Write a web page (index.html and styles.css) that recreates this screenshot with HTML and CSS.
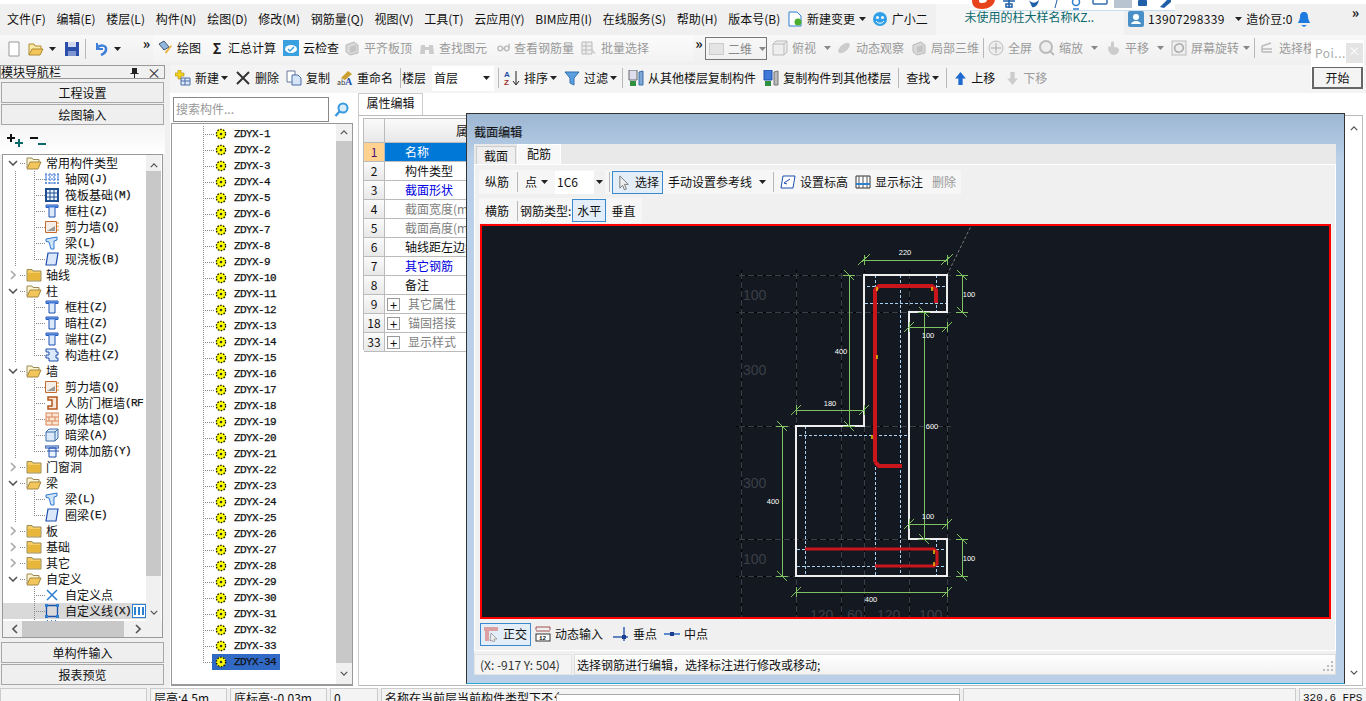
FILE: index.html
```html
<!DOCTYPE html>
<html lang="zh-CN">
<head>
    <meta charset="UTF-8">
    <title>截面编辑</title>
    <link rel="stylesheet" href="styles.css">
</head>
<body>
    <!-- shared icons -->
    <svg class="defs" width="0" height="0">
        <symbol id="gear" viewBox="0 0 12 12"><circle cx="6" cy="6" r="5" fill="#ff0"/><circle cx="6" cy="6" r="4.600" fill="none" stroke="#111" stroke-width="1.400" stroke-dasharray="1.500 1.400"/><circle cx="6" cy="6" r="1.300" fill="#333"/></symbol>
        <symbol id="folder" viewBox="0 0 16 14"><path d="M1 3V1.500h5L7 3h8v10H1z" fill="#f4cd62" stroke="#9b8a55"/><path d="M2 5h12v7H2z" fill="#e9b63c"/></symbol>
        <symbol id="folder-open" viewBox="0 0 16 14"><path d="M1 12V2h5l1 1.500h6V6" fill="#fbf3d0" stroke="#9b8a55"/><path d="M1 13l3-7h11l-3 7z" fill="#f2c65a" stroke="#a58a45"/></symbol>
        <symbol id="col" viewBox="0 0 14 14"><path d="M1 1h12v2.500H10V13H4V3.500H1z" fill="#dce9fb" stroke="#1d4fb0"/><path d="M1.500 1.500h11v2h-11z" fill="#3f78d8"/></symbol>
        <symbol id="wall" viewBox="0 0 14 14"><path d="M.5 1.500h11v11H.5z" fill="#f4eee8" stroke="#c86a28"/><path d="M2 11l8-5v5z" fill="#999"/><path d="M13 2v10" stroke="#e08a2a" stroke-dasharray="2 1.500"/></symbol>
        <symbol id="beam" viewBox="0 0 14 14"><path d="M1 3l11-2v3L9 5v8H6l-2-7-3-.5z" fill="#cfe3f8" stroke="#2c7ad0"/></symbol>
        <symbol id="slab" viewBox="0 0 14 14"><path d="M3 1h10l-2 12H1z" fill="#dbe8fa" stroke="#1d4fb0" stroke-width="1.200"/></symbol>
        <symbol id="caret" viewBox="0 0 7 4"><path d="M0 0h7L3.500 4z" fill="#222"/></symbol>
        <symbol id="caret-g" viewBox="0 0 7 4"><path d="M0 0h7L3.500 4z" fill="#888"/></symbol>
        <symbol id="gray" viewBox="0 0 16 16"><path d="M2 5l8-3 4 3v8l-8 2-4-3z" fill="#d8d8d8" stroke="#bbb"/><path d="M6 7l6-2v6l-6 2z" fill="#c4c4c4"/></symbol>
        <symbol id="chev-d" viewBox="0 0 10 6"><path d="M1 1l4 4 4-4" fill="none" stroke="#555" stroke-width="1.600"/></symbol>
        <symbol id="chev-r" viewBox="0 0 6 10"><path d="M1 1l4 4-4 4" fill="none" stroke="#aaa" stroke-width="1.600"/></symbol>
        <symbol id="chev-u" viewBox="0 0 10 6"><path d="M1 5l4-4 4 4" fill="none" stroke="#555" stroke-width="1.600"/></symbol>
        <symbol id="chev-l" viewBox="0 0 6 10"><path d="M5 1L1 5l4 4" fill="none" stroke="#555" stroke-width="1.600"/></symbol>
        <symbol id="chev-rd" viewBox="0 0 6 10"><path d="M1 1l4 4-4 4" fill="none" stroke="#555" stroke-width="1.600"/></symbol>
    </svg>

    <div class="strip"></div>

    <div class="menubar">
        <span>文件(F)</span><span>编辑(E)</span><span>楼层(L)</span><span>构件(N)</span><span>绘图(D)</span><span>修改(M)</span><span>钢筋量(Q)</span><span>视图(V)</span><span>工具(T)</span><span>云应用(Y)</span><span>BIM应用(I)</span><span>在线服务(S)</span><span>帮助(H)</span><span>版本号(B)</span>
        <span class="tool change">
            <svg class="i16" viewBox="0 0 16 16"><path d="M2 1h8l4 4v10H2z" fill="#fff" stroke="#2f7fd0"/><circle cx="11" cy="11" r="3.500" fill="#4caf2e"/></svg>
            新建变更 <svg class="car"><use href="#caret"/></svg>
        </span>
        <span class="tool helper">
            <svg class="i16" viewBox="0 0 16 16"><circle cx="8" cy="8" r="7" fill="#2f9fe8"/><circle cx="5.500" cy="6.500" r="1.500" fill="#fff"/><circle cx="10.500" cy="6.500" r="1.500" fill="#fff"/><path d="M4 10c2 3 6 3 8 0" stroke="#fff" fill="none"/></svg>
            广小二
        </span>
        <span class="msg-tab">未使用的柱大样名称KZ..</span>
        <span class="tool user">
            <svg class="i16" viewBox="0 0 16 16"><rect width="16" height="16" rx="2" fill="#4a90c8"/><circle cx="8" cy="6" r="3" fill="#fff"/><path d="M3 13c1-4 9-4 10 0z" fill="#fff"/></svg>
            <span class="phone">13907298339</span> <svg class="car"><use href="#caret"/></svg>
        </span>
        <span class="beans">造价豆:0</span>
        <svg class="bell" viewBox="0 0 14 16"><path d="M7 1c3 0 4 2 4 5 0 3 2 5 2 6H1c0-1 2-3 2-6 0-3 1-5 4-5z" fill="#1f7ae0"/><path d="M4 14h6l-3 2z" fill="#1f7ae0"/></svg>
        <span class="more">»</span>
    </div>

    <div class="toolbar">
        <span class="tb-group">
            <svg class="i16" viewBox="0 0 16 16"><path d="M3 1h10l0 3v11H3z" fill="#fff" stroke="#999"/></svg>
            <svg class="i16 open" viewBox="0 0 16 16"><path d="M1 14V3h5l1 2h6v3" fill="#fbe9a8" stroke="#b08a30"/><path d="M1 14l3-6h11l-3 6z" fill="#f2c65a" stroke="#b08a30"/></svg>
            <svg class="car"><use href="#caret"/></svg>
            <svg class="i16 save" viewBox="0 0 16 16"><path d="M1 1h14v14H1z" fill="#2b4fa8"/><path d="M4 1h8v5H4z" fill="#cfd9f0"/><path d="M4 10h8v5H4z" fill="#7f95cf"/></svg>
            <i class="sep"></i>
            <svg class="i16" viewBox="0 0 16 16"><path d="M4 2v6h6" fill="none" stroke="#3f7fd8" stroke-width="2"/><path d="M4 7c3-4 10-3 9 2-.5 3-3 4-5 5" fill="none" stroke="#3f7fd8" stroke-width="2.500"/></svg>
            <svg class="car"><use href="#caret"/></svg>
        </span>
        <span class="more inline">»</span>
        <span class="tb-seg seg-main">
            <span class="tb"><svg class="i16" viewBox="0 0 16 16"><path d="M2 4l5-3 5 6-5 3z" fill="#8fb7e0" stroke="#456"/><path d="M8 12l6-7 1 1-6 8z" fill="#e6b23a"/></svg>绘图</span>
            <span class="tb"><b class="sigma">Σ</b>汇总计算</span>
            <span class="tb"><svg class="i16" viewBox="0 0 16 16"><rect width="16" height="16" fill="#3aa0e0"/><ellipse cx="8" cy="9" rx="6" ry="4" fill="#fff"/><path d="M5 9l2 2 4-4" stroke="#3aa0e0" fill="none" stroke-width="1.500"/></svg>云检查</span>
            <span class="tb off back"><svg class="i16"><use href="#gray"/></svg>平齐板顶</span>
            <span class="tb off"><svg class="i16" viewBox="0 0 16 16"><path d="M2 5h4v9H1zM10 5h4l1 9h-5zM6 7h4v3H6z" fill="#ccc"/></svg>查找图元</span>
            <span class="tb off"><svg class="i13 glasses" viewBox="0 0 14 14"><circle cx="3.500" cy="8" r="2.500" fill="none" stroke="#bbb" stroke-width="1.500"/><circle cx="10.500" cy="8" r="2.500" fill="none" stroke="#bbb" stroke-width="1.500"/><path d="M6 8h2M13 8V3" stroke="#bbb" stroke-width="1.500"/></svg>查看钢筋量</span>
            <span class="tb off"><svg class="i16" viewBox="0 0 16 16"><path d="M1 2h10v12H1zM1 6h10M1 10h10M5 2v12" fill="#eee" stroke="#bbb"/><path d="M10 7l5 7-3-1z" fill="#ccc"/></svg>批量选择</span>
        </span>
        <span class="more inline m2">»</span>
        <span class="view-box"><i class="swatch"></i>二维<svg class="car view-car"><use href="#caret-g"/></svg></span>
        <span class="tb-seg seg-view">
            <span class="tb off"><svg class="i16" viewBox="0 0 16 16"><path d="M1 4h11v11H1zM1 4l3-3h11v11l-3 3M12 4l3-3" fill="#eee" stroke="#bbb"/></svg>俯视<svg class="car gap-c"><use href="#caret-g"/></svg></span>
            <span class="tb off back"><svg class="i16" viewBox="0 0 16 16"><ellipse cx="8" cy="8" rx="7" ry="3.500" transform="rotate(-40 8 8)" fill="#ccc"/></svg>动态观察</span>
            <span class="tb off"><svg class="i16"><use href="#gray"/></svg>局部三维</span>
            <i class="sep"></i>
            <span class="tb off"><svg class="i16" viewBox="0 0 16 16"><circle cx="8" cy="8" r="7" fill="#eee" stroke="#bbb"/><path d="M8 3v10M3 8h10" stroke="#aaa"/></svg>全屏</span>
            <span class="tb off"><svg class="i16" viewBox="0 0 16 16"><circle cx="7" cy="7" r="6" fill="#eee" stroke="#bbb" stroke-width="2"/><path d="M11 11l4 4" stroke="#bbb" stroke-width="2"/></svg>缩放<svg class="car gap-c"><use href="#caret-g"/></svg></span>
            <span class="tb off"><svg class="i16" viewBox="0 0 16 16"><path d="M3 8c0-2 3-2 3-1V3c0-2 3-2 3 0v4c3 0 5 1 5 3s-2 5-5 5-6-3-6-7z" fill="#ccc"/></svg>平移<svg class="car gap-c"><use href="#caret-g"/></svg></span>
            <span class="tb off"><svg class="i16" viewBox="0 0 16 16"><rect x="1" y="1" width="14" height="14" fill="#eee" stroke="#bbb"/><path d="M4 10a4.500 4.500 0 0 1 8-4M12 6a4.500 4.500 0 0 1-8 4" fill="none" stroke="#aaa" stroke-width="1.500"/></svg>屏幕旋转<svg class="car"><use href="#caret-g"/></svg></span>
            <i class="sep"></i>
            <span class="tb off"><svg class="i16" viewBox="0 0 16 16"><path d="M3 6l9-3M3 9h10M3 12h10M3 6v6" stroke="#bbb" fill="none" stroke-width="1.500"/></svg>选择楼</span>
        </span>
    </div>

    <div class="main">
        <aside class="nav">
            <div class="nav-title">
                <span>模块导航栏</span>
                <svg class="pin" viewBox="0 0 9 11"><path d="M2 1h5v5h1.500v1h-3.500v4h-1V7H.500V6H2z" fill="#222"/></svg>
                <span class="close">×</span>
            </div>
            <div class="nav-btn">工程设置</div>
            <div class="nav-btn">绘图输入</div>
            <div class="tree-tools">
                <svg width="22" height="16" viewBox="0 0 22 16"><path d="M4 2v8M0 6h8" stroke="#111" stroke-width="2"/><path d="M12 7v8M8 11h8" stroke="#0a6a6a" stroke-width="2"/></svg>
                <svg width="18" height="16" viewBox="0 0 18 16"><path d="M0 6h8" stroke="#111" stroke-width="2"/><path d="M8 12h8" stroke="#0a6a6a" stroke-width="2"/></svg>
            </div>
            <div class="tree-box">
                <div class="tree-view">
                    <div class="tree">
                        <div class="node"><svg class="exp"><use href="#chev-d"/></svg><svg class="fld"><use href="#folder-open"/></svg>常用构件类型</div>
                        <div class="kid"><svg class="kic" viewBox="0 0 14 14"><path d="M1 1v12M5 1v12M9 1v12M13 1v12M0 3h14M0 7h14M0 11h14" stroke="#2f6fd0" stroke-dasharray="2 1"/></svg>轴网<em>(J)</em></div>
                        <div class="kid"><svg class="kic" viewBox="0 0 14 14"><rect x="1" y="1" width="12" height="12" fill="#eaf2fc" stroke="#1d4f90" stroke-width="2"/><path d="M5 1v12M9 1v12M1 5h12M1 9h12" stroke="#1d4f90"/></svg>筏板基础<em>(M)</em></div>
                        <div class="kid"><svg class="kic"><use href="#col"/></svg>框柱<em>(Z)</em></div>
                        <div class="kid"><svg class="kic"><use href="#wall"/></svg>剪力墙<em>(Q)</em></div>
                        <div class="kid"><svg class="kic"><use href="#beam"/></svg>梁<em>(L)</em></div>
                        <div class="kid last"><svg class="kic"><use href="#slab"/></svg>现浇板<em>(B)</em></div>
                        <div class="node"><svg class="exp r"><use href="#chev-r"/></svg><svg class="fld"><use href="#folder"/></svg>轴线</div>
                        <div class="node"><svg class="exp"><use href="#chev-d"/></svg><svg class="fld"><use href="#folder-open"/></svg>柱</div>
                        <div class="kid"><svg class="kic"><use href="#col"/></svg>框柱<em>(Z)</em></div>
                        <div class="kid"><svg class="kic"><use href="#col"/></svg>暗柱<em>(Z)</em></div>
                        <div class="kid"><svg class="kic"><use href="#col"/></svg>端柱<em>(Z)</em></div>
                        <div class="kid last"><svg class="kic" viewBox="0 0 14 14"><path d="M4 1h7v3h2v3h-2v3h2v3H4v-3H1V7h3V4H1V1z" fill="#dce9fb" stroke="#1d4fb0"/></svg>构造柱<em>(Z)</em></div>
                        <div class="node"><svg class="exp"><use href="#chev-d"/></svg><svg class="fld"><use href="#folder-open"/></svg>墙</div>
                        <div class="kid"><svg class="kic"><use href="#wall"/></svg>剪力墙<em>(Q)</em></div>
                        <div class="kid"><svg class="kic" viewBox="0 0 14 14"><path d="M3 1h9v12H3v-3h4V4H3z" fill="#f6e7d8" stroke="#b5561c" stroke-width="1.500"/></svg>人防门框墙<em>(RF</em></div>
                        <div class="kid"><svg class="kic" viewBox="0 0 14 14"><rect x="1" y="1" width="13" height="12" fill="#fbe6d4" stroke="#d8875a"/><path d="M1 5h13M1 9h13M7 1v4M4 5v4M10 5v4M7 9v4" stroke="#d8875a"/></svg>砌体墙<em>(Q)</em></div>
                        <div class="kid"><svg class="kic" viewBox="0 0 14 14"><path d="M1 4l3-3h9v9l-3 3H1z" fill="#dce9f8" stroke="#3a6ea8"/><path d="M1 4h9v9M10 4l3-3" fill="none" stroke="#3a6ea8"/></svg>暗梁<em>(A)</em></div>
                        <div class="kid last"><svg class="kic" viewBox="0 0 14 14"><path d="M0 2h14v2H0zM4 4h7v9H4zM2 7h12" fill="#eaf2fc" stroke="#1d4fb0"/></svg>砌体加筋<em>(Y)</em></div>
                        <div class="node"><svg class="exp r"><use href="#chev-r"/></svg><svg class="fld"><use href="#folder"/></svg>门窗洞</div>
                        <div class="node"><svg class="exp"><use href="#chev-d"/></svg><svg class="fld"><use href="#folder-open"/></svg>梁</div>
                        <div class="kid"><svg class="kic"><use href="#beam"/></svg>梁<em>(L)</em></div>
                        <div class="kid last"><svg class="kic"><use href="#slab"/></svg>圈梁<em>(E)</em></div>
                        <div class="node"><svg class="exp r"><use href="#chev-r"/></svg><svg class="fld"><use href="#folder"/></svg>板</div>
                        <div class="node"><svg class="exp r"><use href="#chev-r"/></svg><svg class="fld"><use href="#folder"/></svg>基础</div>
                        <div class="node"><svg class="exp r"><use href="#chev-r"/></svg><svg class="fld"><use href="#folder"/></svg>其它</div>
                        <div class="node"><svg class="exp"><use href="#chev-d"/></svg><svg class="fld"><use href="#folder-open"/></svg>自定义</div>
                        <div class="kid solo"><svg class="kic" viewBox="0 0 14 14"><path d="M2 2l10 10M12 2L2 12" stroke="#2f7fd0" stroke-width="1.500"/></svg>自定义点</div>
                        <div class="kid solo sel"><svg class="kic" viewBox="0 0 14 14"><path d="M1.500 1.500h11v11h-11z" fill="none" stroke="#1d4fb0" stroke-width="1.300"/><path d="M0 0h3v3H0zM11 0h3v3h-3zM0 11h3v3H0zM11 11h3v3h-3z" fill="#2f7fd0"/></svg>自定义线<em>(X)</em><svg class="sel-ic" viewBox="0 0 14 14"><rect x=".5" y=".5" width="13" height="13" fill="#fff" stroke="#2f7fd0"/><path d="M3 3v8M7 3v8M11 3v8" stroke="#2f7fd0" stroke-width="2"/></svg></div>
                        <div class="kid solo"><svg class="kic" viewBox="0 0 14 14"><path d="M0 3l3-3M4 3l3-3M8 3l3-3" stroke="#2f7fd0"/></svg></div>
                    </div>
                    <div class="vbar">
                        <svg class="sb-up"><use href="#chev-u"/></svg>
                        <div class="thumb"></div>
                        <div class="rest"><svg class="sb-dn"><use href="#chev-d"/></svg></div>
                    </div>
                </div>
                <div class="hbar"><svg class="sb-l"><use href="#chev-l"/></svg><div class="hthumb"></div><svg class="sb-r"><use href="#chev-rd"/></svg></div>
            </div>
            <div class="nav-btn low">单构件输入</div>
            <div class="nav-btn">报表预览</div>
        </aside>

        <section class="work">
            <div class="cmdbar">
                <span class="tb"><svg class="i16" viewBox="0 0 16 16"><path d="M0 3h3V0h3v3h3v3H6v3H3V6H0z" fill="#f2d020" stroke="#a88a10" stroke-width=".6"/><path d="M6 8h9v7H6zM6 11h9M10 8v7" fill="#dfe8f8" stroke="#4a6ea8"/></svg>新建<svg class="car"><use href="#caret"/></svg></span>
                <span class="tb"><svg class="i16" viewBox="0 0 16 16"><path d="M2 2l12 12M14 2L2 14" stroke="#333" stroke-width="2"/></svg>删除</span>
                <span class="tb"><svg class="i16" viewBox="0 0 16 16"><path d="M1 1h8v11H1z" fill="#fff" stroke="#6a7a9a"/><path d="M6 5h6l3 3v7H6z" fill="#d6e4f8" stroke="#4a6ea8"/></svg>复制</span>
                <span class="tb"><svg class="i16" viewBox="0 0 16 16"><path d="M4 8l7-7 4 3-7 6z" fill="#c9a030"/><text x="0" y="15" class="ab">ab</text><text x="8" y="15" class="aa">A</text></svg>重命名</span>
                <i class="sep s-a"></i>
                <span>楼层</span>
                <span class="floor-box">首层<svg class="car"><use href="#caret"/></svg></span>
                <i class="sep s-b"></i>
                <span class="tb"><svg class="i16" viewBox="0 0 16 16"><text x="0" y="7" class="az1">A</text><text x="0" y="15" class="az2">Z</text><path d="M12 1v13M9 11l3 4 3-4" stroke="#222" fill="none"/></svg>排序<svg class="car"><use href="#caret"/></svg></span>
                <span class="tb"><svg class="i16" viewBox="0 0 16 16"><path d="M1 2h14L10 8v7l-4-2V8z" fill="#5aa0e0" stroke="#2f70b0"/></svg>过滤<svg class="car"><use href="#caret"/></svg></span>
                <i class="sep s-c"></i>
                <span class="tb"><svg class="i16" viewBox="0 0 16 16"><path d="M1 0h8v10H1z" fill="#dde" stroke="#666"/><path d="M2 11h6v5H2z" fill="#2f9040"/><path d="M11 2l4-1v14h-4z" fill="#7fa8d8" stroke="#3a6ea8"/></svg>从其他楼层复制构件</span>
                <span class="tb"><svg class="i16" viewBox="0 0 16 16"><path d="M1 0h8v10H1z" fill="#3f78d8" stroke="#1d4fb0"/><path d="M2 11h6v5H2z" fill="#2f9040"/><path d="M11 2l4-1v14h-4z" fill="#bbb" stroke="#777"/></svg>复制构件到其他楼层</span>
                <i class="sep"></i>
                <span class="tb">查找<svg class="car"><use href="#caret"/></svg></span>
                <i class="sep"></i>
                <span class="tb"><svg class="i13" viewBox="0 0 12 14"><path d="M6 1l5 6H8v6H4V7H1z" fill="#1f6ad0"/></svg>上移</span>
                <span class="tb off down"><svg class="i13" viewBox="0 0 12 14"><path d="M6 13l5-6H8V1H4v6H1z" fill="#ccc"/></svg>下移</span>
            </div>
            <div class="panes">
                <div class="comps">
                    <div class="search"><span class="search-in">搜索构件...</span>
                        <svg class="mag" viewBox="0 0 16 16"><circle cx="9" cy="6" r="4.500" fill="#d8ecfa" stroke="#3a9ae0" stroke-width="2"/><path d="M5.500 9.500L1.500 14" stroke="#3a9ae0" stroke-width="2.500"/></svg>
                    </div>
                    <div class="comp-body">
                        <div class="comp-list">
                            <div class="row"><svg class="g"><use href="#gear"/></svg>ZDYX-1</div>
                            <div class="row"><svg class="g"><use href="#gear"/></svg>ZDYX-2</div>
                            <div class="row"><svg class="g"><use href="#gear"/></svg>ZDYX-3</div>
                            <div class="row"><svg class="g"><use href="#gear"/></svg>ZDYX-4</div>
                            <div class="row"><svg class="g"><use href="#gear"/></svg>ZDYX-5</div>
                            <div class="row"><svg class="g"><use href="#gear"/></svg>ZDYX-6</div>
                            <div class="row"><svg class="g"><use href="#gear"/></svg>ZDYX-7</div>
                            <div class="row"><svg class="g"><use href="#gear"/></svg>ZDYX-8</div>
                            <div class="row"><svg class="g"><use href="#gear"/></svg>ZDYX-9</div>
                            <div class="row"><svg class="g"><use href="#gear"/></svg>ZDYX-10</div>
                            <div class="row"><svg class="g"><use href="#gear"/></svg>ZDYX-11</div>
                            <div class="row"><svg class="g"><use href="#gear"/></svg>ZDYX-12</div>
                            <div class="row"><svg class="g"><use href="#gear"/></svg>ZDYX-13</div>
                            <div class="row"><svg class="g"><use href="#gear"/></svg>ZDYX-14</div>
                            <div class="row"><svg class="g"><use href="#gear"/></svg>ZDYX-15</div>
                            <div class="row"><svg class="g"><use href="#gear"/></svg>ZDYX-16</div>
                            <div class="row"><svg class="g"><use href="#gear"/></svg>ZDYX-17</div>
                            <div class="row"><svg class="g"><use href="#gear"/></svg>ZDYX-18</div>
                            <div class="row"><svg class="g"><use href="#gear"/></svg>ZDYX-19</div>
                            <div class="row"><svg class="g"><use href="#gear"/></svg>ZDYX-20</div>
                            <div class="row"><svg class="g"><use href="#gear"/></svg>ZDYX-21</div>
                            <div class="row"><svg class="g"><use href="#gear"/></svg>ZDYX-22</div>
                            <div class="row"><svg class="g"><use href="#gear"/></svg>ZDYX-23</div>
                            <div class="row"><svg class="g"><use href="#gear"/></svg>ZDYX-24</div>
                            <div class="row"><svg class="g"><use href="#gear"/></svg>ZDYX-25</div>
                            <div class="row"><svg class="g"><use href="#gear"/></svg>ZDYX-26</div>
                            <div class="row"><svg class="g"><use href="#gear"/></svg>ZDYX-27</div>
                            <div class="row"><svg class="g"><use href="#gear"/></svg>ZDYX-28</div>
                            <div class="row"><svg class="g"><use href="#gear"/></svg>ZDYX-29</div>
                            <div class="row"><svg class="g"><use href="#gear"/></svg>ZDYX-30</div>
                            <div class="row"><svg class="g"><use href="#gear"/></svg>ZDYX-31</div>
                            <div class="row"><svg class="g"><use href="#gear"/></svg>ZDYX-32</div>
                            <div class="row"><svg class="g"><use href="#gear"/></svg>ZDYX-33</div>
                            <div class="row end"><span class="row-sel"><svg class="g"><use href="#gear"/></svg>ZDYX-34</span></div>
                        </div>
                        <div class="list-bar">
                            <svg class="sb-up"><use href="#chev-u"/></svg>
                            <div class="list-thumb"></div>
                            <svg class="sb-dn"><use href="#chev-d"/></svg>
                        </div>
                    </div>
                </div>
                <div class="props">
                    <div class="tab-head"><span class="prop-tab">属性编辑</span></div>
                    <div class="prop-body">
                        <div class="prop-table">
                            <div class="ph"></div><div class="ph name">属</div>
                            <div class="pn cur">1</div><div class="pv cur">名称</div>
                            <div class="pn">2</div><div class="pv">构件类型</div>
                            <div class="pn">3</div><div class="pv blue">截面形状</div>
                            <div class="pn">4</div><div class="pv grey">截面宽度(mm)</div>
                            <div class="pn">5</div><div class="pv grey">截面高度(mm)</div>
                            <div class="pn">6</div><div class="pv">轴线距左边线距离</div>
                            <div class="pn">7</div><div class="pv blue">其它钢筋</div>
                            <div class="pn">8</div><div class="pv">备注</div>
                            <div class="pn">9</div><div class="pv grey group"><i class="plus">+</i>其它属性</div>
                            <div class="pn">18</div><div class="pv grey group"><i class="plus">+</i>锚固搭接</div>
                            <div class="pn">33</div><div class="pv grey group"><i class="plus">+</i>显示样式</div>
                        </div>
                        <div class="prop-bar">
                            <svg class="sb-up"><use href="#chev-u"/></svg>
                            <svg class="sb-dn"><use href="#chev-d"/></svg>
                        </div>
                    </div>
                </div>
            </div>
        </section>
    </div>

    <div class="status">
        <span class="cell c1"></span>
        <span class="cell c2">层高:4.5m</span>
        <span class="cell c3">底标高:-0.03m</span>
        <span class="cell c4">0</span>
        <span class="cell c5">名称在当前层当前构件类型下不允</span>
        <span class="cell c6"></span>
        <span class="cell c7">320.6 FPS</span>
    </div>

    <!-- section editor window -->
    <div class="dialog">
        <div class="dlg-title">截面编辑</div>
        <div class="dlg-pane">
            <div class="dlg-tabs"><span class="dtab">截面</span><span class="dtab on">配筋</span></div>
            <div class="dlg-content">
                <div class="dbar first">
                    <span>纵筋</span><i class="sep ml4"></i>
                    <span class="tb ml3">点<svg class="car"><use href="#caret"/></svg></span>
                    <span class="rebar-box ml3">1C6<span class="rebar-btn"><svg class="car"><use href="#caret"/></svg></span></span>
                    <i class="sep"></i>
                    <span class="tb active pick"><svg class="i13" viewBox="0 0 12 16"><path d="M1 1l9 9H6l2 5-2 1-2-5-3 3z" fill="#eee" stroke="#777"/></svg>选择</span>
                    <span class="tb ml1">手动设置参考线<svg class="car gap-r"><use href="#caret"/></svg></span>
                    <i class="sep ml3"></i>
                    <span class="tb ml2"><svg class="i16" viewBox="0 0 16 16"><path d="M3 2h12l-2 12H1z" fill="#fff" stroke="#1d4fb0"/><path d="M4 9l6-4M4 9l3 1" stroke="#1d4fb0" fill="none"/></svg>设置标高</span>
                    <span class="tb ml3"><svg class="i16" viewBox="0 0 16 16"><path d="M1 2h14v12H1z" fill="#fff" stroke="#333"/><path d="M4 2v12M8 2v12M12 2v12" stroke="#555"/><path d="M1 10h14" stroke="#2f7fd0" stroke-width="2"/></svg>显示标注</span>
                    <span class="del">删除</span>
                </div>
                <div class="dbar second">
                    <span>横筋</span><i class="sep"></i>
                    <span>钢筋类型:</span>
                    <span class="tb active">水平</span>
                    <span class="ml3">垂直</span>
                </div>
                <div class="canvas">
                    <svg class="cad" viewBox="481 227 849 391">
                        <g class="grid">
                            <path d="M735 276H950M735 313H950M735 427H950M735 540H950M735 577H950M740 271V618M795 271V618M840 271V618M863 271V618M908 271V618M946 271V618"/>
                        </g>
                        <g class="griddash">
                            <path d="M735 276H950M735 313H950M735 427H950M735 540H950M735 577H950M740 271V618M795 271V618M840 271V618M863 271V618M908 271V618M946 271V618"/>
                        </g>
                        <path class="diag" d="M946 276L970 227"/>
                        <path class="guide" d="M866 287H946M864 304H946M798 436H908M796 550H806M935 550H946M796 567H874M935 567H946M804 427V577M874 276V290M874 463V577M899 276V577M935 276V313M935 540V577"/>
                        <path class="outline" d="M863 276H946V313H908V540H946V577H795V427H863Z"/>
                        <path class="bar" d="M874 463V291L878 287H931L935 291V304M874 463L878 467H901"/>
                        <path class="bar thin" d="M804 550H933L936 553V565L933 567H874"/>
                        <path class="mark" d="M876 288v4M931 288v4M876 356v4M871 436v4M933 551v4M933 563v4"/>
                        <g class="dim">
                            <path d="M863 261H946M857 266l12-11M940 266l12-11M863 256v10M946 256v10"/>
                            <path d="M961 276V313M956 271l10 10M956 308l10 10M955 276h12M955 313h12"/>
                            <path d="M848 276V427M843 271l10 10M843 422l10 10M842 276h12M842 427h12"/>
                            <path d="M908 328H946M903 333l10-10M941 333l10-10M908 323v10M946 323v10"/>
                            <path d="M923 313V540M918 308l10 10M918 535l10 10M917 313h12M917 540h12"/>
                            <path d="M795 411H863M790 416l10-10M858 416l10-10M795 406v10M863 406v10"/>
                            <path d="M781 427V577M776 422l10 10M776 572l10 10M775 427h12M775 577h12"/>
                            <path d="M908 525H946M903 530l10-10M941 530l10-10M908 520v10M946 520v10"/>
                            <path d="M961 540V577M956 535l10 10M956 572l10 10M955 540h12M955 577h12"/>
                            <path d="M795 593H946M790 598l10-10M941 598l10-10M795 588v10M946 588v10"/>
                        </g>
                        <g class="num">
                            <text x="904" y="256">220</text>
                            <text x="968" y="298">100</text>
                            <text x="840" y="355">400</text>
                            <text x="927" y="339">100</text>
                            <text x="931" y="430">600</text>
                            <text x="829" y="407">180</text>
                            <text x="772" y="505">400</text>
                            <text x="927" y="520">100</text>
                            <text x="968" y="562">100</text>
                            <text x="870" y="603">400</text>
                        </g>
                        <g class="axis">
                            <text x="742" y="301">100</text>
                            <text x="742" y="376">300</text>
                            <text x="742" y="489">300</text>
                            <text x="742" y="565">100</text>
                            <text x="809" y="621">120</text>
                            <text x="846" y="621">60</text>
                            <text x="876" y="621">120</text>
                            <text x="918" y="621">100</text>
                        </g>
                    </svg>
                </div>
                <div class="dbar third">
                    <span class="tb active"><svg class="i16" viewBox="0 0 16 16"><path d="M1 1h14v4H6v10H2V5H1z" fill="#dca0a0"/><path d="M8 7l6 6-3 0 1 2-2 1-1-2-2 1z" fill="#eee" stroke="#777" stroke-width=".6"/></svg>正交</span>
                    <span class="tb"><svg class="i16" viewBox="0 0 16 16"><path d="M1 1h14M1 5h14M1 1v3M15 1v3" stroke="#a05050" fill="none"/><rect x="1" y="8" width="14" height="7" fill="#fff" stroke="#333"/><text x="4" y="14" class="tiny">12</text></svg>动态输入</span>
                    <span class="gap-group"></span>
                    <span class="tb"><svg class="i16" viewBox="0 0 16 16"><path d="M0 11h15M11 1v14" stroke="#2f5fb0" stroke-width="1.500"/><rect x="9" y="9" width="4" height="4" fill="#1d3f90"/></svg>垂点</span>
                    <span class="tb ml3"><svg class="i16" viewBox="0 0 16 16"><path d="M0 8h16" stroke="#5a8ad0" stroke-width="2"/><rect x="6" y="6" width="4" height="4" fill="#1d3f90"/></svg>中点</span>
                </div>
            </div>
            <div class="dlg-status">
                <span class="coord">(X: -917 Y: 504)</span>
                <span class="hint">选择钢筋进行编辑，选择标注进行修改或移动;</span>
                <svg class="grip" viewBox="0 0 12 12"><path d="M9 1h2v2H9zM5 5h2v2H5zM9 5h2v2H9zM1 9h2v2H1zM5 9h2v2H5zM9 9h2v2H9z" fill="#bbb"/></svg>
            </div>
        </div>
    </div>

    <!-- cut-off floating bar at the top edge -->
    <div class="float-bar">
        <svg width="26" height="10" viewBox="0 0 26 10"><path d="M2 0c0 6 3 9 10 9 6 0 12-3 13-9h-8c0 2-2 3-5 3S9 2 9 0z" fill="#e8441c"/></svg>
        <svg class="nudge" width="14" height="8" viewBox="0 0 14 8"><path d="M1 1h12M4 4h6v3H4zM7 0v8" stroke="#1f5fa8" stroke-width="1.500" fill="none"/></svg>
        <svg width="14" height="8" viewBox="0 0 14 8"><path d="M2 0c3 4 7 3 10 0-1 5-4 8-7 7z" fill="#1f5fa8"/></svg>
        <svg width="8" height="8" viewBox="0 0 8 8"><path d="M5 0L3 8" stroke="#1f5fa8"/></svg>
        <svg width="10" height="10" viewBox="0 0 10 10"><circle cx="5" cy="2" r="3.500" fill="#fff" stroke="#2f7fd0" stroke-width="1.500"/><path d="M2 9h6" stroke="#2f7fd0" stroke-width="1.500"/></svg>
        <svg width="16" height="6" viewBox="0 0 16 6"><rect x="1" y="-3" width="14" height="7" rx="1" fill="#fff" stroke="#2f70b0" stroke-width="1.500"/></svg>
        <svg class="nudge" width="18" height="8" viewBox="0 0 18 8"><rect width="18" height="8" fill="#b8c4d0"/></svg>
        <svg class="nudge" width="10" height="6" viewBox="0 0 10 6"><rect width="9" height="6" rx="1" fill="#1f5fa8"/></svg>
        <svg width="12" height="8" viewBox="0 0 12 8"><path d="M1 7L8 0h4v2L5 8z" fill="#1f5fa8"/></svg>
    </div>

    <!-- small recorder popup -->
    <div class="popup">
        <div class="pop-top"><span>Poi...</span><span class="pop-x">×</span></div>
        <div class="pop-btn">开始</div>
    </div>

    <div class="cover"></div>
</body>
</html>
```

FILE: styles.css
```css
* {
    box-sizing: border-box;
}
html, body {
    margin: 0;
    padding: 0;
}
body {
    position: relative;
    width: 1366px;
    height: 701px;
    overflow: hidden;
    background: #f0f0f0;
    font-family: "Noto Sans CJK SC", "Liberation Sans", sans-serif;
    font-size: 12px;
    line-height: 16px;
    color: #111;
}
.defs { position: absolute; }
svg { flex: none; display: block; }
i, em { font-style: normal; }

.i16 { width: 16px; height: 16px; }
.i13 { width: 13px; height: 15px; }
.car { width: 7px; height: 4px; }
.gap-c { margin-left: 5px; }
.gap-r { margin-left: 3px; }
.sep { width: 1px; height: 20px; background: #b8b8b8; flex: none; }
.ml1 { margin-left: 1px; }
.ml2 { margin-left: 2px; }
.ml3 { margin-left: 3px; }
.ml4 { margin-left: 4px; }

.strip { height: 4px; background: #fff; }

/* menu bar */
.menubar {
    position: relative;
    height: 31px;
    display: flex;
    align-items: center;
    gap: 10.700px;
    padding: 0 0 2px 7px;
    background: #f0f0f0;
    white-space: nowrap;
}
.menubar > * { flex: none; }
.tool { display: flex; align-items: center; gap: 4px; }
.change { margin-left: -4px; }
.helper { margin-left: -5px; }
.msg-tab {
    width: 188px;
    height: 31px;
    margin: 2px 0 0 -2px;
    padding: 5px 0 0 28px;
    background: #f6f6f6;
    color: #0b6a6e;
}
.user { margin-left: -7px; }
.phone { letter-spacing: 0.300px; }
.user .car { margin-left: 6px; }
.beans { margin-left: -6px; }
.bell { width: 14px; height: 16px; margin-left: -6px; }
.more { font-size: 14px; font-weight: 700; line-height: 10px; }
.menubar .more { margin-left: 30px; margin-top: -14px; }

/* main toolbar */
.toolbar {
    height: 27px;
    display: flex;
    align-items: center;
    padding-left: 6px;
    background: linear-gradient(#f8f8f8, #f0f0f0);
    white-space: nowrap;
}
.tb-group { display: flex; align-items: center; gap: 5px; width: 134px; flex: none; }
.tb-group .sep { margin-right: 2px; }
.open { margin-left: 1px; }
.save { margin-left: 3px; }
.more.inline { width: 13px; text-align: center; align-self: flex-start; margin-top: 3px; flex: none; }
.tb-seg { display: flex; align-items: center; gap: 7px; height: 27px; padding-bottom: 2px; }
.seg-main { width: 540px; flex: none; padding-left: 4px; background: linear-gradient(#fbfbfb, #f3f3f3); }
.more.m2 { width: 12px; }
.tb { display: flex; align-items: center; gap: 4px; flex: none; }
.off { color: #9a9a9a; }
.back { margin-left: -2px; }
.glasses { margin-left: 3px; }
.sigma { width: 14px; margin-left: 2px; font-size: 14px; text-align: center; color: #222; }
.view-box {
    width: 62px;
    height: 23px;
    flex: none;
    display: flex;
    align-items: center;
    gap: 4px;
    padding-left: 3px;
    border: 1px solid #777;
    color: #888;
}
.swatch { width: 16px; height: 12px; background: #e4e4e4; border: 1px solid #ccc; }
.view-car { margin-left: 3px; }
.seg-view { margin-left: 5px; }
.seg-view .gap-c { margin-left: 4px; }
.seg-view .sep { margin: 0 -3px; }

/* body columns */
.main {
    height: 623px;
    margin-top: 3px;
    display: flex;
}
.nav {
    width: 165px;
    flex: none;
    display: flex;
    flex-direction: column;
}
.nav-title {
    height: 14px;
    flex: none;
    display: flex;
    align-items: center;
    border: 1px solid #999;
    background: #f0f0f0;
    line-height: 12px;
}
.nav-title span:first-child { flex: 1; }
.pin { width: 9px; height: 11px; margin-right: 8px; }
.close { width: 17px; font-size: 14px; color: #333; }
.nav-btn {
    height: 21px;
    flex: none;
    margin: 1px 1px 0;
    text-align: center;
    line-height: 19px;
    border: 1px solid #a8a8a8;
    background: #efefef;
}
.nav-title + .nav-btn { margin-top: 3px; }
.nav-btn.low { margin-top: 4px; }
.tree-tools {
    height: 29px;
    flex: none;
    padding: 7px 0 0 7px;
    display: flex;
    gap: 1px;
    background: linear-gradient(#f4f4f4, #fff);
}
.tree-box {
    height: 484px;
    flex: none;
    margin: 0 2px;
    border: 1px solid #999;
    background: #fff;
    display: flex;
    flex-direction: column;
}
.tree-view { flex: 1; min-height: 0; display: flex; overflow: hidden; }
.tree { width: 143px; overflow: hidden; white-space: nowrap; }
.node, .kid { height: 16px; display: flex; align-items: center; }
.node {
    padding-left: 5px;
    background: repeating-linear-gradient(90deg, #888 0 1px, transparent 1px 2px) 17px 8px / 6px 1px no-repeat;
}
.exp { width: 10px; height: 6px; margin-right: 8px; }
.exp.r { width: 6px; height: 10px; margin: 0 10px 0 2px; }
.fld { width: 16px; height: 14px; margin-right: 4px; }
.kid {
    padding-left: 42px;
    background:
        repeating-linear-gradient(#888 0 1px, transparent 1px 2px) 12px 0 / 1px 100% no-repeat,
        repeating-linear-gradient(#888 0 1px, transparent 1px 2px) 31px 0 / 1px 100% no-repeat,
        repeating-linear-gradient(90deg, #888 0 1px, transparent 1px 2px) 31px 8px / 12px 1px no-repeat;
}
.kid.last {
    background:
        repeating-linear-gradient(#888 0 1px, transparent 1px 2px) 12px 0 / 1px 100% no-repeat,
        repeating-linear-gradient(#888 0 1px, transparent 1px 2px) 31px 0 / 1px 8px no-repeat,
        repeating-linear-gradient(90deg, #888 0 1px, transparent 1px 2px) 31px 8px / 12px 1px no-repeat;
}
.kid.solo {
    background:
        repeating-linear-gradient(#888 0 1px, transparent 1px 2px) 31px 0 / 1px 100% no-repeat,
        repeating-linear-gradient(90deg, #888 0 1px, transparent 1px 2px) 31px 8px / 12px 1px no-repeat;
}
.kid.sel { background-color: #d9d9d9; }
.kic { width: 14px; height: 14px; margin-right: 6px; }
em { font-family: "Liberation Mono", monospace; font-size: 11px; letter-spacing: -0.600px; -webkit-text-stroke: 0.250px #111; }
.sel-ic { width: 14px; height: 14px; margin-left: 1px; }
.vbar { width: 15px; flex: none; display: flex; flex-direction: column; background: #f0f0f0; }
.sb-up { width: 8px; height: 5px; margin: 8px auto 3px; }
.thumb { height: 405px; background: #c8c8c8; }
.rest { flex: 1; display: flex; align-items: flex-end; }
.sb-dn { width: 8px; height: 5px; margin: 0 auto 6px; }
.hbar { height: 16px; flex: none; display: flex; align-items: center; background: #f0f0f0; }
.sb-l { width: 6px; height: 10px; margin-left: 9px; }
.hthumb { width: 102px; height: 16px; margin: 0 11px 0 4px; background: #c8c8c8; }
.sb-r { width: 6px; height: 10px; }

.work { flex: 1; min-width: 0; display: flex; flex-direction: column; padding-left: 5px; }

/* command bar above panes */
.cmdbar {
    height: 28px;
    flex: none;
    display: flex;
    align-items: center;
    gap: 7px;
    padding: 0 0 2px 5px;
    background: #f4f4f4;
    white-space: nowrap;
}
.cmdbar > * { flex: none; }
.cmdbar .car { margin-left: -2px; }
.s-a { margin-right: -6px; }
.s-b { margin: 0 -2px 0 -3px; }
.s-c { margin: 0 -2px; }
.down { margin-left: 4px; }
.floor-box {
    width: 62px;
    height: 25px;
    display: flex;
    align-items: center;
    justify-content: space-between;
    padding: 0 4px 0 2px;
    margin-left: -1px;
    background: #fff;
}

.panes { flex: 1; min-height: 0; display: flex; background: #fff; padding-bottom: 2px; }
.comps { width: 182px; flex: none; margin-left: 1px; display: flex; flex-direction: column; }
.search { height: 30px; flex: none; padding: 4px 0 0 2px; display: flex; background: #fff; }
.search-in {
    width: 156px;
    height: 25px;
    padding: 3px 0 0 2px;
    border: 1px solid #888;
    background: #fff;
    color: #999;
}
.mag { width: 16px; height: 16px; margin: 5px 0 0 5px; }
.comp-body {
    flex: 1;
    min-height: 0;
    display: flex;
    border: 1px solid #999;
    border-bottom-width: 2px;
}
.comp-list { flex: 1; padding-top: 2px; }
.row {
    height: 16px;
    display: flex;
    align-items: center;
    padding-left: 43px;
    font-family: "Liberation Mono", monospace;
    font-size: 11px;
    letter-spacing: -0.600px;
    -webkit-text-stroke: 0.250px #111;
    background:
        repeating-linear-gradient(#888 0 1px, transparent 1px 2px) 31px 0 / 1px 100% no-repeat,
        repeating-linear-gradient(90deg, #888 0 1px, transparent 1px 2px) 31px 8px / 12px 1px no-repeat;
}
.row.end {
    padding-left: 40px;
    background:
        repeating-linear-gradient(#888 0 1px, transparent 1px 2px) 31px 0 / 1px 8px no-repeat,
        repeating-linear-gradient(90deg, #888 0 1px, transparent 1px 2px) 31px 8px / 9px 1px no-repeat;
}
.g { width: 12px; height: 12px; margin-right: 7px; }
.row-sel {
    height: 16px;
    display: flex;
    align-items: center;
    padding: 0 4px 0 3px;
    background: #316ac5;
}
.list-bar { width: 16px; flex: none; display: flex; flex-direction: column; background: #f0f0f0; }
.list-bar .sb-up { margin: 6px auto 6px; }
.list-thumb { height: 522px; background: #c8c8c8; }
.list-bar .sb-dn { margin: 8px auto 0; }

/* property editor */
.props { flex: 1; min-width: 0; margin-left: 5px; display: flex; flex-direction: column; }
.tab-head { height: 22px; flex: none; background: #fff; }
.prop-tab {
    display: inline-block;
    width: 65px;
    height: 22px;
    padding-top: 1px;
    text-align: center;
    border: 1px solid #ccc;
    border-bottom: none;
    background: #fff;
}
.prop-body { flex: 1; min-height: 0; display: flex; border: 1px solid #bbb; border-left-color: #ccc; margin-right: 3px; padding: 2px 0 0 4px; }
.prop-table {
    flex: 1;
    min-width: 0;
    height: 232px;
    display: grid;
    grid-template-columns: 21px 1fr;
    grid-template-rows: 24px repeat(11, 19px);
    border-left: 1px solid #bbb;
    border-top: 1px solid #bbb;
}
.ph { background: linear-gradient(#fafafa, #e8e8e8); border-right: 1px solid #bbb; border-bottom: 1px solid #bbb; }
.ph.name { padding: 4px 0 0 71px; }
.pn {
    text-align: center;
    line-height: 18px;
    background: linear-gradient(#fafafa, #e8e8e8);
    border-right: 1px solid #bbb;
    border-bottom: 1px solid #bbb;
}
.pv { padding-left: 20px; line-height: 18px; border-bottom: 1px solid #bbb; white-space: nowrap; overflow: hidden; }
.pn.cur { background: #ffd28f; color: #50107a; }
.pv.cur { background: #0078d7; color: #fff; }
.blue { color: #0000e0; }
.grey { color: #808080; }
.group { padding-left: 2px; display: flex; align-items: center; gap: 8px; }
.plus {
    width: 13px;
    height: 13px;
    border: 1px solid #999;
    text-align: center;
    font-size: 13px;
    line-height: 11px;
    color: #111;
    background: #fff;
}
.prop-bar { width: 17px; flex: none; display: flex; flex-direction: column; justify-content: space-between; }
.prop-bar .sb-up { margin: 8px auto 0; }
.prop-bar .sb-dn { margin: 0 auto 10px; }

/* status line */
.status {
    height: 13px;
    display: flex;
    gap: 3px;
    overflow: hidden;
    white-space: nowrap;
}
.cell { display: block; flex: none; height: 20px; padding: 1px 0 0 3px; border: 1px solid #ccc; background: #f4f4f4; overflow: hidden; }
.c1 { width: 147px; }
.c2 { width: 77px; }
.c3 { width: 97px; }
.c4 { width: 48px; }
.c5 { width: 579px; }
.c6 { width: 333px; }
.c7 { width: 70px; font-family: "Liberation Mono", monospace; font-size: 11px; }

/* floating windows */
.dialog {
    position: absolute;
    left: 466px;
    top: 113px;
    width: 879px;
    height: 571px;
    padding: 0 8px 8px 7px;
    display: flex;
    flex-direction: column;
    background: linear-gradient(#9db6d2, #b9d0e8 8%);
    border: 1px solid #333;
    border-bottom-color: #2aa8d8;
}
.dlg-title { height: 30px; flex: none; padding-top: 10px; text-shadow: 1px 0 0 rgba(0, 0, 0, 0.3); }
.dlg-pane { flex: 1; min-height: 0; display: flex; flex-direction: column; background: #f0f0f0; }
.dlg-tabs { height: 20px; flex: none; display: flex; align-items: flex-end; gap: 1px; padding-left: 2px; background: #e9e9e9; }
.dtab { width: 40px; height: 18px; text-align: center; border: 1px solid #ccc; border-bottom: none; line-height: 18px; background: #efefef; }
.dtab.on { width: 44px; height: 20px; background: #f8f8f8; border-color: #fff; }
.dlg-content { flex: 1; min-height: 0; padding: 5px 3px 0 4px; border: 1px solid #fff; display: flex; flex-direction: column; }
.dbar { display: flex; align-items: center; white-space: nowrap; flex: none; }
.dbar.first { height: 24px; width: 482px; gap: 4px; padding-left: 6px; background: #f6f6f6; }
.dbar.second { height: 25px; width: 163px; gap: 2px; margin: 4px 0 1px; padding-left: 6px; background: #f6f6f6; }
.dbar.second .sep { margin-left: 6px; }
.dbar.second .active { margin-left: -1px; padding: 0 4px; }
.active { height: 23px; padding: 0 3px 0 5px; border: 1px solid #3a8ad0; background: #e4eef8; }
.pick { margin-left: -2px; }
.rebar-box { width: 50px; height: 23px; flex: none; display: flex; align-items: center; justify-content: space-between; background: #fff; padding-left: 2px; }
.rebar-btn { width: 11px; height: 23px; display: flex; align-items: center; justify-content: center; background: #f0f0f0; }
.del { color: #999; margin-left: 5px; }
.canvas {
    height: 395px;
    flex: none;
    margin-left: 1px;
    margin-right: 1px;
    border: 2px solid #f00;
    background: #141820;
}
.cad { width: 849px; height: 391px; }
.grid path { fill: none; stroke: #3a3f47; shape-rendering: crispEdges; }
.griddash path { fill: none; stroke: #000; stroke-dasharray: 3 6; shape-rendering: crispEdges; }
.diag { fill: none; stroke: #777; stroke-dasharray: 3 2; }
.guide { fill: none; stroke: #a8d0f0; stroke-dasharray: 3 2; shape-rendering: crispEdges; }
.outline { fill: none; stroke: #eee; stroke-width: 2; }
.bar { fill: none; stroke: #c8161c; stroke-width: 4; }
.bar.thin { stroke-width: 3; }
.mark { fill: none; stroke: #f0c000; stroke-width: 1.500; }
.dim path { fill: none; stroke: #7fc060; shape-rendering: crispEdges; }
.num text { font-family: "Liberation Sans", sans-serif; font-size: 7.500px; fill: #fff; text-anchor: middle; }
.axis text { font-family: "Liberation Sans", sans-serif; font-size: 14px; fill: #3a3f48; }
.ab { font-size: 7px; fill: #333; }
.aa { font: 700 10px "Liberation Serif", serif; fill: #1f4fa8; }
.az1 { font: 700 8px "Liberation Sans", sans-serif; fill: #1f4fa8; }
.az2 { font: 700 8px "Liberation Sans", sans-serif; fill: #a03030; }
.tiny { font: 700 6px "Liberation Mono", monospace; fill: #111; }
.dbar.third { height: 26px; gap: 4px; margin-top: 2px; width: 233px; padding-left: 1px; }
.dbar.third .active { padding: 0 3px 0 2px; }
.gap-group { width: 2px; }
.dlg-status {
    position: relative;
    height: 21px;
    flex: none;
    margin-top: 3px;
    display: flex;
    gap: 2px;
}
.coord { width: 98px; padding: 2px 0 0 5px; background: #f4f4f4; border: 1px solid #e4e4e4; color: #333; }
.hint { flex: 1; padding: 2px 0 0 2px; background: linear-gradient(#fff, #f2f2f2); border: 1px solid #ddd; }
.grip { position: absolute; right: 2px; bottom: 3px; width: 12px; height: 12px; }

.float-bar {
    position: absolute;
    left: 970px;
    top: 0;
    width: 205px;
    height: 11px;
    display: flex;
    align-items: flex-start;
    gap: 11px;
    background: #fff;
    border-bottom: 1px solid #c8dcec;
    overflow: hidden;
}
.nudge { margin-left: -5px; }

.popup {
    position: absolute;
    left: 1311px;
    top: 40px;
    width: 53px;
    height: 49px;
    padding: 2px 1px 0;
    background: #fff;
}
.pop-top { height: 25px; display: flex; justify-content: space-between; color: #aaa; padding: 3px 0 0 3px; letter-spacing: 0.500px; }
.pop-x { width: 20px; height: 20px; margin-top: -2px; text-align: center; background: #e4e4e4; color: #fff; }
.pop-btn {
    height: 22px;
    text-align: center;
    line-height: 19px;
    border: 2px solid #666;
    border-top-width: 1px;
    background: #f4f4f4;
}

.cover {
    position: absolute;
    left: 556px;
    top: 694px;
    width: 404px;
    height: 7px;
    background: #fff;
    border: 1px solid #aaa;
    border-bottom: none;
}
```
